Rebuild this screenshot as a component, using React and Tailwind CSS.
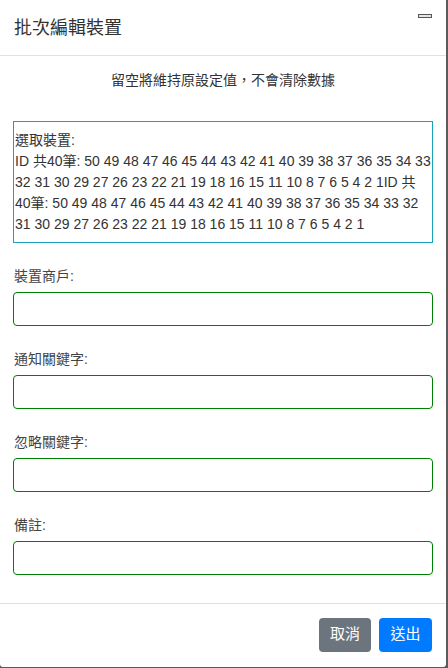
const FONT = 'font-["Liberation_Sans","Noto_Sans_CJK_TC",sans-serif]';

const IDS = 'ID 共40筆: 50 49 48 47 46 45 44 43 42 41 40 39 38 37 36 35 34 33 32 31 30 29 27 26 23 22 21 19 18 16 15 11 10 8 7 6 5 4 2 1';

const FIELDS = ['裝置商戶:', '通知關鍵字:', '忽略關鍵字:', '備註:'];

export default function App() {
  return (
    <div className={`w-[448px] h-[668px] bg-[#5b5b5b] ${FONT}`}>
      <div className="w-[446px] h-[667px] bg-white rounded-b-[3px] flex flex-col">
        {/* Header */}
        <div className="h-[56px] border-b border-[#dee2e6] flex items-start justify-between pl-[14px] pr-[14px]">
          <h5 className="mt-[14px] text-[18px] leading-[28px] text-[#333]">批次編輯裝置</h5>
          <div className="mt-[14px] w-[14px] h-[4px] border border-[#555] bg-[#e5e5e5]" />
        </div>

        {/* Body */}
        <div className="flex-1 px-[13px]">
          <p className="mt-[14px] text-center text-[14px] leading-[21px] text-[#333]">
            留空將維持原設定值，不會清除數據
          </p>

          <div className="mt-[30px] border border-[#17a2b8] pt-[8px] pb-[7px] pl-[1px] pr-px text-[14px] leading-[21px] text-[#333]">
            <div>選取裝置:</div>
            <div>{IDS}{IDS}</div>
          </div>

          <div className="mt-[23px] flex flex-col gap-[23px]">
            {FIELDS.map((f) => (
              <div key={f}>
                <label className="block h-[21px] text-[14px] leading-[21px] text-[#444] pl-[1px]">{f}</label>
                <input
                  type="text"
                  className="mt-[5px] block w-full h-[34px] rounded-[4px] border border-[#008000] outline-none px-3 text-[14px]"
                />
              </div>
            ))}
          </div>
        </div>

        {/* Footer */}
        <div className="h-[64px] border-t border-[#dee2e6] flex items-center justify-end gap-2 pr-[14px] pb-[2px]">
          <button className="h-[34px] w-[52px] rounded-[4px] bg-[#6c757d] text-white text-[15px]">取消</button>
          <button className="h-[34px] w-[53px] rounded-[4px] bg-[#007bff] text-white text-[15px]">送出</button>
        </div>
      </div>
    </div>
  );
}
